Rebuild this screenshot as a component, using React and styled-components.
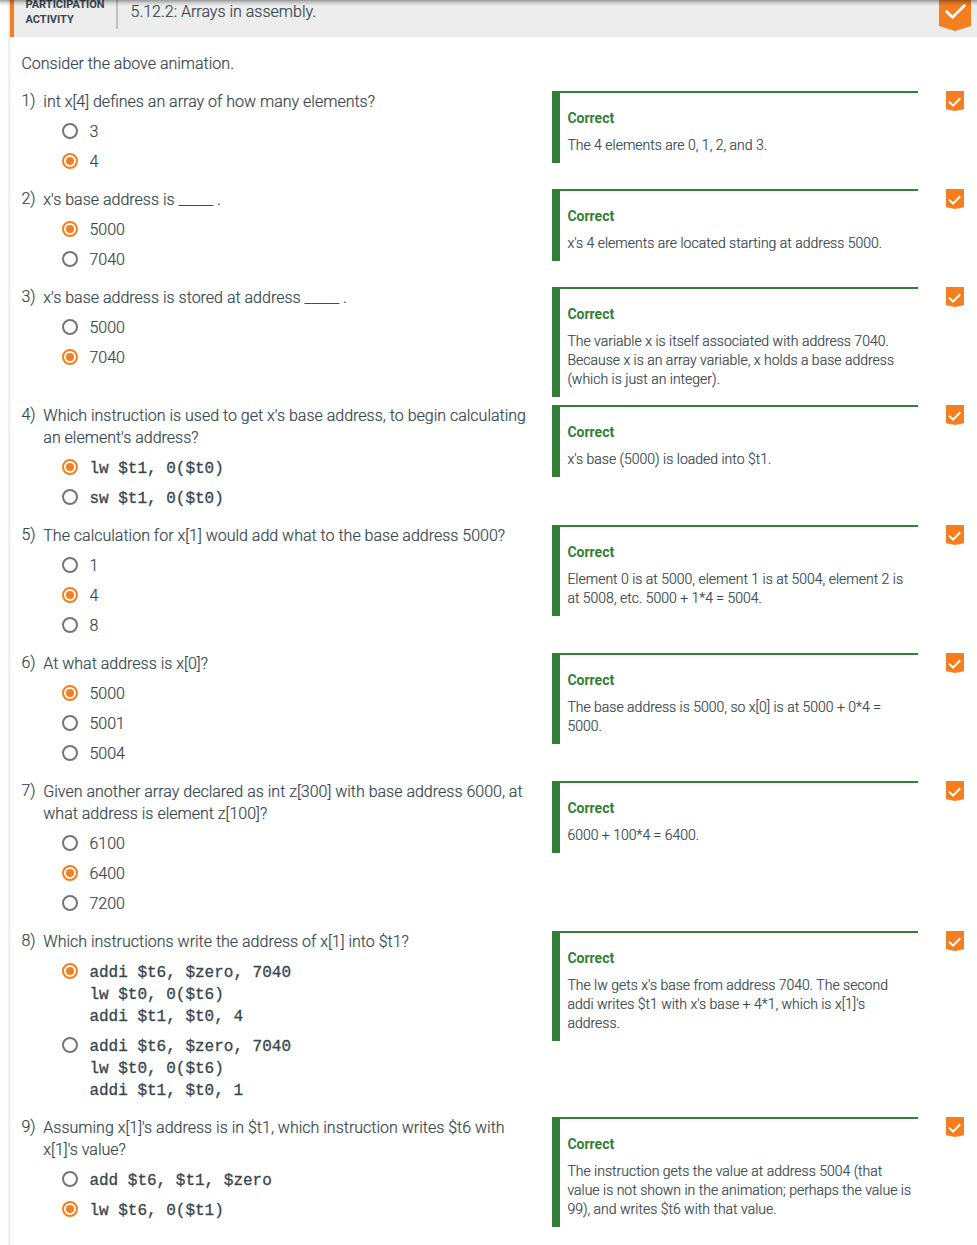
import React from 'react';
import styled, { createGlobalStyle } from 'styled-components';

const GlobalStyle = createGlobalStyle`
  * { box-sizing: border-box; }
  body {
    margin: 0;
    background: #fff;
    color: #37474f;
    font: 300 16px/22px Roboto, sans-serif;
    -webkit-text-stroke: 0.2px;
  }
`;

const Page = styled.main`
  position: relative;
  height: 1245px;
  padding-left: 10px;
  overflow: hidden;
  background: linear-gradient(to right, #fff 0 7px, #f5f5f5 8px, #e6e6e6 10px, #fff 10px);
`;

const TopShadow = styled.div`
  position: absolute;
  inset: 0 0 auto 0;
  height: 6px;
  background: linear-gradient(rgba(0, 0, 0, 0.36), rgba(0, 0, 0, 0.12) 50%, rgba(0, 0, 0, 0));
`;

const Header = styled.header`
  display: flex;
  align-items: flex-start;
  height: 37px;
  background: #ededed;
  border-left: 4px solid #f57f20;
`;

const ActivityType = styled.div`
  width: 104px;
  height: 37px;
  margin-top: -8px;
  padding: 5px 0 0 11.5px;
  border-right: 2px solid #c1c1c1;
  font-size: 11px;
  font-weight: 700;
  line-height: 15px;
  -webkit-text-stroke: 0;
`;

const Title = styled.h1`
  flex: 1;
  margin: 0 0 0 12.5px;
  font-size: 16px;
  font-weight: 300;
  line-height: 23px;
`;

const HeaderBadge = styled.div`
  width: 32px;
  height: 31px;
  margin-right: 6px;
  svg { display: block; }
`;

const Intro = styled.p`
  margin: 16px 0 15px 11.4px;
`;

const Questions = styled.div`
  display: flex;
  flex-direction: column;
  padding-left: 12px;
`;

const Row = styled.section`
  display: grid;
  grid-template-columns: 530px 366px 19px;
  column-gap: 0;
  align-items: start;
`;

const Question = styled.div`
  display: grid;
  grid-template-columns: 21px 1fr;
  padding: 1px 0 15px;
`;

const Number = styled.span`
  margin-left: -0.6px;
  line-height: 20px;
`;

const Prompt = styled.div`
  padding-left: 0.3px;
  white-space: pre;
`;

const Options = styled.div`
  grid-column: 2;
  padding-left: 19px;
`;

const Option = styled.div`
  display: flex;
  margin-top: 8px;
`;

const Radio = styled.span`
  display: grid;
  place-items: center;
  flex: none;
  width: 16px;
  height: 16px;
  margin: 2px 11.4px 0 0;
  border: 2px solid ${(p) => (p.$on ? '#f57f20' : '#757575')};
  border-radius: 50%;

  &::after {
    content: '';
    width: 8px;
    height: 8px;
    border-radius: 50%;
    background: ${(p) => (p.$on ? '#f57f20' : 'transparent')};
  }
`;

const Answer = styled.span`
  white-space: pre;
`;

const Code = styled.code`
  padding-top: 1px;
  margin-bottom: -1px;
  font: 400 16px/22px 'Liberation Mono', monospace;
  -webkit-text-stroke: 0.3px;
  white-space: pre;
`;

const Explanation = styled.div`
  margin: 1px 0 7px;
  padding: 16px 0 8px 7.4px;
  border-top: 2px solid #347f37;
  border-left: 8px solid #347f37;
  font-size: 14px;
  line-height: 19px;
  white-space: pre;
`;

const Verdict = styled.div`
  margin-bottom: 8px;
  color: #347f37;
  font-weight: 700;
  -webkit-text-stroke: 0;
`;

const RowBadge = styled.div`
  margin: 1px 0 0 28px;
  svg { display: block; }
`;

const blank = '_____';

const questions = [
  { text: 'int x[4] defines an array of how many elements?', options: ['3', '4'], picked: 1, why: 'The 4 elements are 0, 1, 2, and 3.' },
  { text: `x's base address is ${blank} .`, options: ['5000', '7040'], picked: 0, why: "x's 4 elements are located starting at address 5000." },
  { text: `x's base address is stored at address ${blank} .`, options: ['5000', '7040'], picked: 1, why: 'The variable x is itself associated with address 7040.\nBecause x is an array variable, x holds a base address\n(which is just an integer).' },
  { text: "Which instruction is used to get x's base address, to begin calculating\nan element's address?", code: true, options: ['lw $t1, 0($t0)', 'sw $t1, 0($t0)'], picked: 0, why: "x's base (5000) is loaded into $t1." },
  { text: 'The calculation for x[1] would add what to the base address 5000?', options: ['1', '4', '8'], picked: 1, why: 'Element 0 is at 5000, element 1 is at 5004, element 2 is\nat 5008, etc. 5000 + 1*4 = 5004.' },
  { text: 'At what address is x[0]?', options: ['5000', '5001', '5004'], picked: 0, why: 'The base address is 5000, so x[0] is at 5000 + 0*4 =\n5000.' },
  { text: 'Given another array declared as int z[300] with base address 6000, at\nwhat address is element z[100]?', options: ['6100', '6400', '7200'], picked: 1, why: '6000 + 100*4 = 6400.' },
  { text: 'Which instructions write the address of x[1] into $t1?', code: true, options: ['addi $t6, $zero, 7040\nlw $t0, 0($t6)\naddi $t1, $t0, 4', 'addi $t6, $zero, 7040\nlw $t0, 0($t6)\naddi $t1, $t0, 1'], picked: 0, why: "The lw gets x's base from address 7040. The second\naddi writes $t1 with x's base + 4*1, which is x[1]'s\naddress." },
  { text: "Assuming x[1]'s address is in $t1, which instruction writes $t6 with\nx[1]'s value?", code: true, options: ['add $t6, $t1, $zero', 'lw $t6, 0($t1)'], picked: 1, why: 'The instruction gets the value at address 5004 (that\nvalue is not shown in the animation; perhaps the value is\n99), and writes $t6 with that value.' },
];

function SmallCheck() {
  return (
    <svg width="18" height="20" viewBox="0 0 18 20">
      <path d="M0 0H18V18.3L9 20L0 18.3Z" fill="#f57f20" />
      <path d="M3 10.6L7 14.6L14.3 7.2" fill="none" stroke="#fff" strokeWidth="2" />
    </svg>
  );
}

function LargeCheck() {
  return (
    <svg width="32" height="31" viewBox="0 0 32 31">
      <path d="M0 0H32V26L16 31L0 26Z" fill="#f57f20" />
      <path d="M6.8 10.8L13.5 17.3L26.2 4.7" fill="none" stroke="#fff" strokeWidth="2.7" />
    </svg>
  );
}

export default function App() {
  return (
    <Page>
      <GlobalStyle />
      <Header>
        <ActivityType>PARTICIPATION<br />ACTIVITY</ActivityType>
        <Title>5.12.2: Arrays in assembly.</Title>
        <HeaderBadge><LargeCheck /></HeaderBadge>
      </Header>
      <Intro>Consider the above animation.</Intro>
      <Questions>
        {questions.map((q, i) => (
          <Row key={q.text}>
            <Question>
              <Number>{i + 1})</Number>
              <Prompt>{q.text}</Prompt>
              <Options>
                {q.options.map((option, j) => (
                  <Option key={option}>
                    <Radio $on={j === q.picked} />
                    {q.code ? <Code>{option}</Code> : <Answer>{option}</Answer>}
                  </Option>
                ))}
              </Options>
            </Question>
            <Explanation>
              <Verdict>Correct</Verdict>
              {q.why}
            </Explanation>
            <RowBadge><SmallCheck /></RowBadge>
          </Row>
        ))}
      </Questions>
      <TopShadow />
    </Page>
  );
}
